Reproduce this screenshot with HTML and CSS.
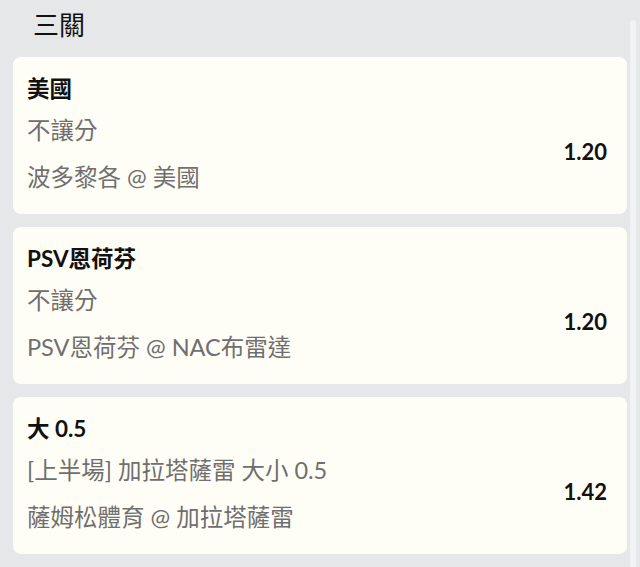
FILE: index.html
```html
<!DOCTYPE html>
<html lang="zh-Hant">
<head>
<meta charset="utf-8">
<link rel="stylesheet" href="styles.css">
</head>
<body>
<div class="page">
  <div class="header">三關</div>
  <div class="list">
    <div class="card">
      <div class="title">美國</div>
      <div class="row">
        <div class="info">
          <div class="market">不讓分</div>
          <div class="match">波多黎各 @ 美國</div>
        </div>
        <div class="odds">1.20</div>
      </div>
    </div>
    <div class="card">
      <div class="title">PSV恩荷芬</div>
      <div class="row">
        <div class="info">
          <div class="market">不讓分</div>
          <div class="match">PSV恩荷芬 @ NAC布雷達</div>
        </div>
        <div class="odds">1.20</div>
      </div>
    </div>
    <div class="card">
      <div class="title">大 0.5</div>
      <div class="row">
        <div class="info">
          <div class="market">[上半場] 加拉塔薩雷 大小 0.5</div>
          <div class="match">薩姆松體育 @ 加拉塔薩雷</div>
        </div>
        <div class="odds">1.42</div>
      </div>
    </div>
  </div>
  <div class="scrollbar"></div>
</div>
</body>
</html>
```
FILE: styles.css
```css
html, body {
  margin: 0;
  padding: 0;
  background: #e6e7e9;
}
body {
  font-family: "Lato", "Noto Sans CJK TC", sans-serif;
  color: #111;
}
.page {
  position: relative;
  width: 640px;
  height: 567px;
  overflow: hidden;
}
.header {
  height: 57px;
  padding-left: 33px;
  font-size: 26px;
  line-height: 50px;
  color: #111;
}
.list {
  display: flex;
  flex-direction: column;
  gap: 13px;
  padding-left: 13px;
  width: 614px;
}
.card {
  background: #fffef6;
  border-radius: 8px;
  height: 157px;
  box-sizing: border-box;
  padding: 14px 20px 0 14px;
}
.title {
  font-size: 22.5px;
  font-weight: 700;
  line-height: 36px;
}
.row {
  display: flex;
  align-items: center;
  justify-content: space-between;
}
.info {
  color: #6f6f6f;
  font-size: 23.5px;
}
.market {
  line-height: 36px;
  margin-top: 5px;
}
.match {
  line-height: 36px;
  margin-top: 11px;
}
.odds {
  font-size: 22px;
  font-weight: 700;
}
.scrollbar {
  position: absolute;
  left: 630px;
  top: 20px;
  width: 6px;
  bottom: 0;
  background: #f1f2f4;
  border-radius: 3px 3px 0 0;
}
```
